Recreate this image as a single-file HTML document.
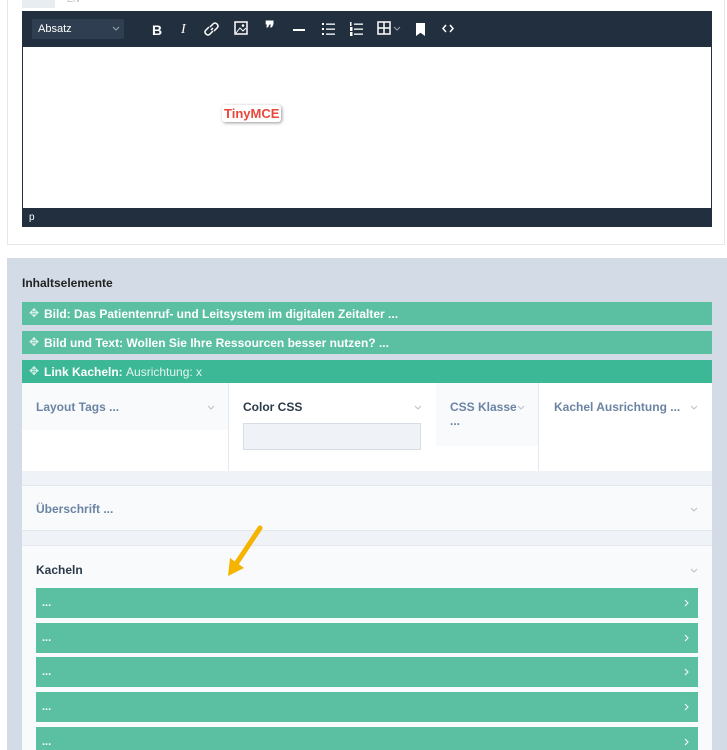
<!DOCTYPE html>
<html><head><meta charset="utf-8"><style>
*{box-sizing:border-box;margin:0;padding:0}
html,body{width:727px;height:750px;overflow:hidden}
body{background:#fff;font-family:"Liberation Sans",sans-serif;position:relative}
.abs{position:absolute}
.top{left:7px;top:-2px;width:718px;height:247px;border:1px solid #e3e7ec;background:#fff}
.tb{left:22px;top:11px;width:690px;height:36px;background:#222f3e}
.tb svg{position:absolute;top:10px}
.ic{position:absolute;top:11px;color:#fff;font-size:14px;font-weight:bold}
.g{left:22px;width:690px;height:23px;background:#5bbfa1;color:#fff;font-size:12px;font-weight:bold;padding:5px 0 0 22px}
.g .mv{position:absolute;left:7px;top:4px;font-weight:normal;opacity:.8}
.row{left:36px;width:662px;height:30px;background:#5bbfa1;color:#fff;font-size:11px;font-weight:bold;padding:9px 0 0 6px}
.row svg{position:absolute;right:9px;top:11px}
.lbl{font-size:12px;font-weight:bold;color:#6b84a3}
.chev{position:absolute}
</style></head><body>
<div class="abs top"></div>
<div class="abs" style="left:22px;top:0;width:33px;height:8px;background:#e8edf2"></div>
<div class="abs" style="left:67px;top:-6px;font-size:9px;color:#bbb">EN</div>
<div class="abs tb">
 <div style="position:absolute;left:10px;top:8px;width:92px;height:20px;background:#2f3e50;border-radius:2px;color:#fff;font-size:11px;padding:4px 6px">Absatz<svg style="top:7px;right:4px" width="8" height="5"><path d="M1 1 L4 4 L7 1" stroke="#9aa5b1" fill="none"/></svg></div>
 <div class="ic" style="left:130px">B</div>
 <div class="ic" style="left:159px;font-family:'Liberation Serif',serif;font-style:italic;font-weight:normal">I</div>
 <svg style="left:182px" width="16" height="16"><path d="M7 9 L9 7 M6 6 L9 3 Q11 1 13 3 Q15 5 13 7 L10 10 M10 10 M9 10 L6 13 Q4 15 2 13 Q0 11 2 9 L5 6" stroke="#fff" stroke-width="1.5" fill="none"/></svg>
 <svg style="left:212px" width="15" height="15"><rect x="1" y="1" width="12" height="12" stroke="#fff" stroke-width="1.5" fill="none"/><path d="M2 12 L6 7 L9 10 L12 7" stroke="#fff" fill="none"/><circle cx="9" cy="4.5" r="1.3" fill="#fff"/></svg>
 <div class="ic" style="left:243px;font-size:18px;top:7px">&#10078;</div>
 <div class="ic" style="left:271px;top:18px;width:12px;height:2px;background:#fff"></div>
 <svg style="left:299px" width="15" height="15"><g fill="#fff"><rect x="1" y="2" width="2" height="2"/><rect x="1" y="7" width="2" height="2"/><rect x="1" y="12" width="2" height="2"/><rect x="5" y="2.5" width="9" height="1.3"/><rect x="5" y="7.5" width="9" height="1.3"/><rect x="5" y="12.5" width="9" height="1.3"/></g></svg>
 <svg style="left:327px" width="15" height="15"><g fill="#fff"><rect x="1" y="1" width="1.5" height="4"/><rect x="1" y="6" width="2.5" height="4"/><rect x="1" y="11" width="2.5" height="4"/><rect x="5" y="2.5" width="9" height="1.3"/><rect x="5" y="7.5" width="9" height="1.3"/><rect x="5" y="12.5" width="9" height="1.3"/></g></svg>
 <svg style="left:355px" width="28" height="15"><rect x="1" y="1" width="12" height="12" stroke="#fff" stroke-width="1.5" fill="none"/><path d="M1 7 H13 M7 1 V13" stroke="#fff" stroke-width="1.5"/><path d="M17 6 L20 9 L23 6" stroke="#9aa5b1" fill="none"/></svg>
 <div class="ic" style="left:394px;width:9px;height:13px;background:#fff;top:12px;clip-path:polygon(0 0,100% 0,100% 100%,50% 75%,0 100%)"></div>
 <svg style="left:419px" width="14" height="15"><path d="M5 4 L2 7.5 L5 11 M9 4 L12 7.5 L9 11" stroke="#fff" stroke-width="1.5" fill="none"/></svg>
</div>
<div class="abs" style="left:22px;top:47px;width:690px;height:162px;border-left:1px solid #222f3e;border-right:1px solid #222f3e;background:#fff"></div>
<div class="abs" style="left:222px;top:105px;font-size:13px;font-weight:bold;color:#e8473a;background:#fff;padding:1px 2px;box-shadow:1px 1px 3px #999;border-radius:3px">TinyMCE</div>
<div class="abs" style="left:22px;top:208px;width:690px;height:19px;background:#222f3e;color:#fff;font-size:10px;padding:4px 7px">p</div>

<div class="abs" style="left:7px;top:258px;width:720px;height:492px;background:#d3dce6"></div>
<div class="abs" style="left:22px;top:276px;font-size:12px;font-weight:bold;color:#222">Inhaltselemente</div>
<div class="abs g" style="top:302px"><span class="mv">&#10021;</span>Bild: Das Patientenruf- und Leitsystem im digitalen Zeitalter ...</div>
<div class="abs g" style="top:331px"><span class="mv">&#10021;</span>Bild und Text: Wollen Sie Ihre Ressourcen besser nutzen? ...</div>
<div class="abs g" style="top:360px;background:#3db896"><span class="mv">&#10021;</span>Link Kacheln: <span style="font-weight:normal;opacity:.85">Ausrichtung: x</span></div>
<div class="abs" style="left:22px;top:383px;width:690px;height:367px;background:#eff2f6"></div>
<div class="abs" style="left:22px;top:383px;width:690px;height:88px;background:#fff"></div>
<div class="abs" style="left:22px;top:383px;width:206px;height:47px;background:#f8fafc"></div>
<div class="abs lbl" style="left:36px;top:400px">Layout Tags ...</div>
<svg class="chev" style="left:207px;top:405px" width="8" height="5"><path d="M1 1 L4 4 L7 1" stroke="#b8c2cc" fill="none"/></svg>
<div class="abs" style="left:228px;top:383px;width:1px;height:88px;background:#e3e8ee"></div>
<div class="abs lbl" style="left:243px;top:400px;color:#2c3a4a">Color CSS</div>
<svg class="chev" style="left:414px;top:405px" width="8" height="5"><path d="M1 1 L4 4 L7 1" stroke="#b8c2cc" fill="none"/></svg>
<div class="abs" style="left:243px;top:423px;width:178px;height:27px;background:#eff2f6;border:1px solid #d6dde5"></div>
<div class="abs" style="left:436px;top:383px;width:102px;height:63px;background:#f8fafc"></div>
<div class="abs lbl" style="left:450px;top:400px">CSS Klasse<br>...</div>
<svg class="chev" style="left:517px;top:405px" width="8" height="5"><path d="M1 1 L4 4 L7 1" stroke="#b8c2cc" fill="none"/></svg>
<div class="abs" style="left:538px;top:383px;width:1px;height:88px;background:#e3e8ee"></div>
<div class="abs lbl" style="left:554px;top:400px">Kachel Ausrichtung ...</div>
<svg class="chev" style="left:690px;top:405px" width="8" height="5"><path d="M1 1 L4 4 L7 1" stroke="#b8c2cc" fill="none"/></svg>

<div class="abs" style="left:22px;top:485px;width:690px;height:46px;background:#f8fafc;border-top:1px solid #e3e8ee;border-bottom:1px solid #e3e8ee"></div>
<div class="abs lbl" style="left:36px;top:502px">Überschrift ...</div>
<svg class="chev" style="left:690px;top:507px" width="8" height="5"><path d="M1 1 L4 4 L7 1" stroke="#b8c2cc" fill="none"/></svg>
<div class="abs" style="left:22px;top:545px;width:690px;height:205px;background:#f8fafc;border-top:1px solid #e3e8ee"></div>
<div class="abs" style="left:36px;top:563px;font-size:12px;font-weight:bold;color:#2c3a4a">Kacheln</div>
<svg class="chev" style="left:690px;top:568px" width="8" height="5"><path d="M1 1 L4 4 L7 1" stroke="#b8c2cc" fill="none"/></svg>
<div class="abs row" style="top:588px">...<svg width="5" height="8"><path d="M1 1 L4 4 L1 7" stroke="#fff" fill="none"/></svg></div>
<div class="abs row" style="top:623px">...<svg width="5" height="8"><path d="M1 1 L4 4 L1 7" stroke="#fff" fill="none"/></svg></div>
<div class="abs row" style="top:657px">...<svg width="5" height="8"><path d="M1 1 L4 4 L1 7" stroke="#fff" fill="none"/></svg></div>
<div class="abs row" style="top:692px">...<svg width="5" height="8"><path d="M1 1 L4 4 L1 7" stroke="#fff" fill="none"/></svg></div>
<div class="abs row" style="top:727px">...<svg width="5" height="8"><path d="M1 1 L4 4 L1 7" stroke="#fff" fill="none"/></svg></div>
<svg class="abs" style="left:220px;top:520px" width="50" height="62"><path d="M40 8 L16 44" stroke="#f5b400" stroke-width="5" stroke-linecap="round"/><path d="M8 56 L10 38 L24 48 Z" fill="#f5b400"/></svg>
</body></html>
